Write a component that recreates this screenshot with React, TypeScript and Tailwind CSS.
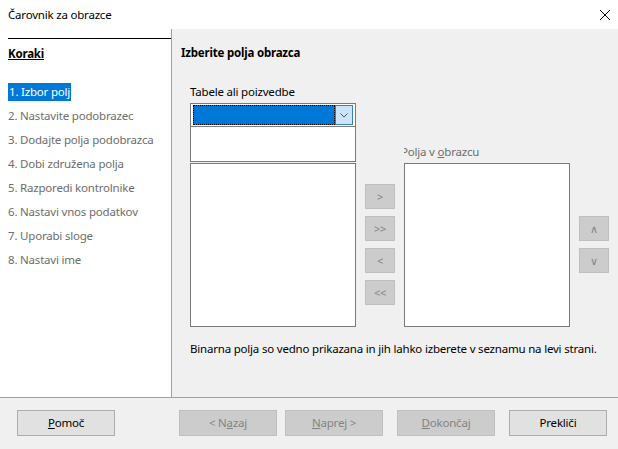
import type { ReactNode } from 'react'

const steps = [
  '1. Izbor polj',
  '2. Nastavite podobrazec',
  '3. Dodajte polja podobrazca',
  '4. Dobi združena polja',
  '5. Razporedi kontrolnike',
  '6. Nastavi vnos podatkov',
  '7. Uporabi sloge',
  '8. Nastavi ime',
]

function SmallButton({ label }: { label: string }) {
  return (
    <div className="flex h-[25px] w-[30px] items-center justify-center border border-[#bfbfbf] bg-[#cccccc] text-[11px] text-[#838383]">
      {label}
    </div>
  )
}

function FooterButton({ children, disabled, className }: { children: ReactNode; disabled?: boolean; className?: string }) {
  return (
    <div
      className={
        'flex h-[26px] w-[98px] items-center justify-center border ' +
        (disabled ? 'border-[#bfbfbf] bg-[#cccccc] text-[#838383] ' : 'border-[#adadad] bg-[#e1e1e1] text-black ') +
        (className ?? '')
      }
    >
      {children}
    </div>
  )
}

export default function App() {
  return (
    <div className="flex h-[449px] w-[618px] flex-col bg-white font-['Segoe_UI','Noto_Sans',sans-serif] text-[11.5px] leading-[16px] tracking-[-0.2px] text-black">
      {/* title bar */}
      <div className="flex h-[29px] items-center justify-between pl-[8px] pr-[7px]">
        <span>Čarovnik za obrazce</span>
        <svg width="12" height="12" viewBox="0 0 12 12">
          <path d="M1 1 L11 11 M11 1 L1 11" stroke="#000" strokeWidth="1" />
        </svg>
      </div>

      <div className="flex flex-1">
        {/* steps */}
        <div className="w-[171px] shrink-0 pl-[8px] pt-[9px]">
          <div className="border-t border-black pt-[7px]">
            <div className="font-bold underline">Koraki</div>
          </div>
          <div className="mt-[18px] flex flex-col">
            {steps.map((s, i) => (
              <div key={s} className="flex h-[24px] items-center">
                {i === 0 ? (
                  <span className="bg-[#0078d7] px-[1px] py-[1px] text-white">{s}</span>
                ) : (
                  <span className="text-[#6d6d6d]">{s}</span>
                )}
              </div>
            ))}
          </div>
        </div>

        {/* main panel */}
        <div className="flex-1 border-l border-[#a0a0a0] bg-[#f0f0f0] pl-[9px] pt-[16px]">
          <div className="font-bold">Izberite polja obrazca</div>
          <div className="ml-[9px]">
            <div className="mt-[23px]">Tabele ali poizvedbe</div>
            <div className="mt-[3px] flex items-start">
              {/* left column */}
              <div className="w-[166px]">
                <div className="flex h-[24px] items-center border border-[#7a7a7a] bg-white px-[2px]">
                  <div className="h-[20px] flex-1 border border-dotted border-black bg-[#0078d7]" />
                  <div className="flex h-[20px] w-[18px] items-center justify-center border border-[#3c7fb1] bg-[#cce4f7]">
                    <svg width="8" height="5" viewBox="0 0 8 5">
                      <path d="M0.5 0.5 L4 4 L7.5 0.5" stroke="#555" fill="none" strokeWidth="1" />
                    </svg>
                  </div>
                </div>
                <div className="h-[35px] border border-t-0 border-[#7a7a7a] bg-white" />
                <div className="mt-[1px] h-[164px] border border-[#7a7a7a] bg-white" />
              </div>

              {/* transfer buttons */}
              <div className="ml-[9px] mt-[81px] flex flex-col gap-[7px]">
                <SmallButton label=">" />
                <SmallButton label=">>" />
                <SmallButton label="<" />
                <SmallButton label="<<" />
              </div>

              {/* right column */}
              <div className="ml-[9px] mt-[41px] w-[166px]">
                <div className="h-[19px] overflow-hidden">
                  <div className="-ml-[3px] text-[#6d6d6d]">
                    Polja v <span className="underline">o</span>brazcu
                  </div>
                </div>
                <div className="h-[164px] border border-[#7a7a7a] bg-white" />
              </div>

              {/* order buttons */}
              <div className="ml-[9px] mt-[113px] flex flex-col gap-[7px]">
                <SmallButton label="∧" />
                <SmallButton label="∨" />
              </div>
            </div>
            <div className="mt-[14px]">
              Binarna polja so vedno prikazana in jih lahko izberete v seznamu na levi strani.
            </div>
          </div>
        </div>
      </div>

      {/* footer */}
      <div className="flex h-[52px] shrink-0 items-start border-t border-[#a0a0a0] bg-[#f0f0f0] pt-[12px]">
        <FooterButton className="ml-[17px]">
          <span><span className="underline">P</span>omoč</span>
        </FooterButton>
        <FooterButton disabled className="ml-[64px]">
          <span>&lt; N<span className="underline">a</span>zaj</span>
        </FooterButton>
        <FooterButton disabled className="ml-[8px]">
          <span><span className="underline">N</span>aprej &gt;</span>
        </FooterButton>
        <FooterButton disabled className="ml-[14px]">
          <span><span className="underline">D</span>okončaj</span>
        </FooterButton>
        <FooterButton className="ml-[14px] w-[97px]">
          <span>Prekliči</span>
        </FooterButton>
      </div>
    </div>
  )
}
